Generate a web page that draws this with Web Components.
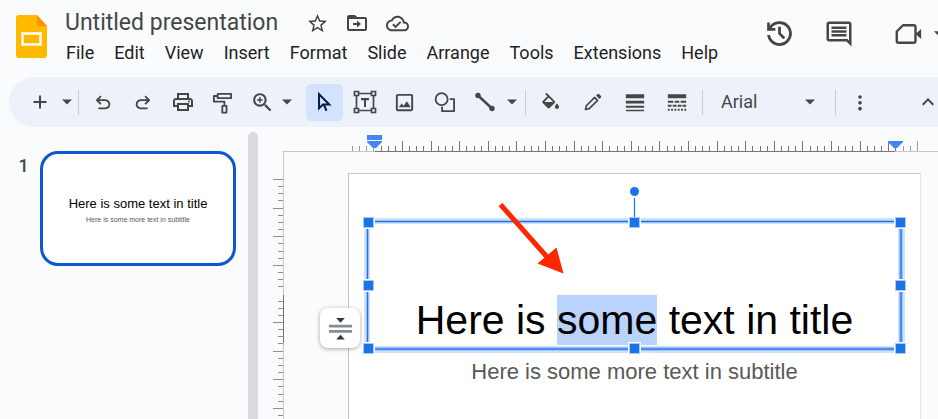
<!DOCTYPE html>
<html lang="en">
<head>
<meta charset="utf-8">
<title>Untitled presentation</title>
<style>
html, body { height: 100%; }
body { margin: 0; background: #f9fbfd; overflow: hidden; font-family: Roboto, "Liberation Sans", sans-serif; color: #444746; }
</style>
</head>
<body>
<slides-app></slides-app>
<script>
const ICONS = {
  star: '<path d="M22 9.24l-7.19-.62L12 2 9.19 8.63 2 9.24l5.46 4.73L5.82 21 12 17.27 18.18 21l-1.63-7.03L22 9.24zM12 15.4l-3.76 2.27 1-4.28-3.32-2.88 4.38-.38L12 6.1l1.71 4.04 4.38.38-3.32 2.88 1 4.28L12 15.4z"/>',
  move: '<path d="M20 6h-8l-2-2H4c-1.1 0-2 .9-2 2v12c0 1.1.9 2 2 2h16c1.1 0 2-.9 2-2V8c0-1.1-.9-2-2-2zm0 12H4V8h16v10zM12 16.500l4-3.500-4-3.500V12H8v2h4z"/><path d="M3 5h8l2 3H3z"/>',
  cloud: '<path d="M19.35 10.04C18.67 6.59 15.64 4 12 4 9.11 4 6.6 5.64 5.35 8.04 2.34 8.36 0 10.91 0 14c0 3.31 2.69 6 6 6h13c2.76 0 5-2.24 5-5 0-2.64-2.05-4.78-4.65-4.96zM19 18H6c-2.21 0-4-1.79-4-4 0-2.05 1.53-3.76 3.56-3.97l1.07-.11.5-.95C8.08 7.14 9.94 6 12 6c2.62 0 4.88 1.86 5.39 4.43l.3 1.5 1.53.11c1.56.1 2.78 1.41 2.78 2.96 0 1.65-1.35 3-3 3zm-9-3.82l-2.09-2.09L6.5 13.5 10 17l6.01-6.01-1.41-1.41z"/>',
  history: '<path d="M12 21q-3.45 0-6.01-2.29T3.05 13H5.1q.35 2.6 2.31 4.3T12 19q2.93 0 4.96-2.04T19 12t-2.04-4.96T12 5q-1.73 0-3.23.8T6.25 8H9v2H3V4h2v2.35q1.28-1.6 3.11-2.47T12 3q1.88 0 3.51.71t2.85 1.93 1.93 2.85T21 12t-.71 3.51-1.93 2.85-2.85 1.93T12 21zm2.8-4.8L11 12.4V7h2v4.6l3.2 3.2z"/>',
  comment: '<path d="M22 4c0-1.1-.9-2-2-2H4c-1.1 0-2 .9-2 2v12c0 1.1.9 2 2 2h14l4 4V4zm-2 13.2L18.8 16H4V4h16v13.2zM6 12h12v2H6zm0-3h12v2H6zm0-3h12v2H6z"/>',
  video: '<path d="M8 5h8.5Q18 5 18 6.5v11q0 1.5-1.500 1.500H4.500Q3 19 3 17.500V10z" fill="none" stroke="currentColor" stroke-width="1.900" stroke-linejoin="round"/><path d="M18 12l4.500-4v8z"/>',
  plus: '<path d="M11 5.500h2V11h5.500v2H13v5.500h-2V13H5.500v-2H11z"/>',
  caret: '<path d="M2 7h20L12 17z"/>',
  undo: '<path d="M7 20v-2h7.100q1.575 0 2.738-1T18 14.500 16.838 12 14.100 11H7.800l2.600 2.600L9 15l-5-5 5-5 1.400 1.400L7.800 9h6.300q2.425 0 4.163 1.575T20 14.500t-1.737 3.925T14.100 20z"/>',
  redo: '<path d="M17 20v-2H9.900q-1.575 0-2.738-1T6 14.500 7.162 12 9.900 11h6.300l-2.600 2.600L15 15l5-5-5-5-1.400 1.400L16.200 9H9.900Q7.475 9 5.737 10.575T4 14.500t1.737 3.925T9.900 20z"/>',
  print: '<path d="M19 8h-1V3H6v5H5c-1.660 0-3 1.340-3 3v6h4v4h12v-4h4v-6c0-1.660-1.340-3-3-3zM8 5h8v3H8V5zm8 14H8v-4h8v4zm2-4v-2H6v2H4v-4c0-.55.45-1 1-1h14c.55 0 1 .45 1 1v4h-2z"/><circle cx="18" cy="11.500" r="1"/>',
  paint: '<path d="M7 3h14v4.500H7zM7 5.200H3V11h11v4M11.800 15.500h4.400v7h-4.400z" fill="none" stroke="currentColor" stroke-width="1.900" stroke-linejoin="round"/>',
  zoom: '<path d="M15.500 14h-.79l-.28-.27A6.471 6.471 0 0 0 16 9.500 6.500 6.500 0 1 0 9.500 16c1.610 0 3.090-.59 4.230-1.570l.27.28v.79l5 4.990L20.490 19l-4.990-5zm-6 0C7.010 14 5 11.990 5 9.500S7.010 5 9.500 5 14 7.010 14 9.500 11.990 14 9.500 14zm.7-7.200H8.800v2h-2v1.400h2v2h1.400v-2h2V8.800h-2z"/>',
  pointer: '<path d="M5.500 3.500v15.500l4.200-4.200h7zM10.500 14.500l3.200 7" fill="none" stroke="currentColor" stroke-width="2.200"/>',
  textbox: '<path d="M3.500 6v12M20.500 6v12M6 3.500h12M6 20.500h12M1.500 1.500h4v4h-4zM18.500 1.500h4v4h-4zM1.500 18.500h4v4h-4zM18.500 18.500h4v4h-4z" fill="none" stroke="currentColor" stroke-width="1.700"/><path d="M8 8h8v2.300h-3V17h-2v-6.700H8z"/>',
  image: '<path d="M19 5v14H5V5h14m0-2H5c-1.100 0-2 .9-2 2v14c0 1.100.9 2 2 2h14c1.100 0 2-.9 2-2V5c0-1.100-.9-2-2-2zM6 17l3-4 2 2.400 3.500-4.600L18.500 17z"/>',
  shape: '<circle cx="9" cy="8.500" r="6.300" fill="none" stroke="currentColor" stroke-width="1.900"/><path d="M17.500 8.500H22V21H9.500v-4.500" fill="none" stroke="currentColor" stroke-width="1.900" stroke-linejoin="round"/>',
  line: '<path d="M5 5.500l14 13" stroke="currentColor" stroke-width="2.400"/><circle cx="5" cy="5.500" r="2.700"/><circle cx="19" cy="18.500" r="2.700"/>',
  fill: '<path d="M16.560 8.940L7.620 0 6.210 1.410l2.380 2.380-5.150 5.150c-.59.59-.59 1.540 0 2.120l5.500 5.500c.29.29.68.44 1.060.44s.77-.15 1.060-.44l5.500-5.500c.59-.58.59-1.530 0-2.120zM5.210 10L10 5.210 14.790 10zM19 11.500s-2.300 2.170-2.300 3.700c0 1.300 1 2.300 2.300 2.300s2.300-1 2.300-2.300c0-1.530-2.300-3.700-2.300-3.700z" transform="translate(-.5 2)"/>',
  pencil: '<path d="M3 21l1-4.500L14 6.500 17.500 10 7.500 20z" fill="none" stroke="currentColor" stroke-width="2" stroke-linejoin="round"/><path d="M15.700 4.300l1.800-1.800q.9-.7 1.700 0L21.500 4.800q.7.8 0 1.700l-1.800 1.800z"/>',
  weight: '<path d="M2 3.500h20v4.500H2zM2 10.500h20v3.200H2zM2 16h20v2.300H2zM2 20.500h20V22H2z"/>',
  dash: '<path d="M2 3.500h20v4.500H2zM2 10.500h6v2.200H2zM9.500 10.500h5v2.200h-5zM16 10.500h6v2.200h-6zM2 15h4v2.200H2zM7.300 15h4.200v2.200H7.300zM12.700 15h4.200v2.200h-4.200zM18 15h4v2.200h-4zM2 19.400h2v2.200H2zM5.600 19.400h2v2.200h-2zM9.200 19.400h2v2.200h-2zM12.800 19.400h2v2.200h-2zM16.400 19.400h2v2.200h-2zM20 19.400h2v2.200h-2z"/>',
  more: '<circle cx="12" cy="6" r="2.200"/><circle cx="12" cy="13" r="2.200"/><circle cx="12" cy="20" r="2.200"/>',
  up: '<path d="M12 8l-6 6 1.410 1.410L12 10.830l4.590 4.580L18 14z"/>',
  collapse: '<path d="M7.500 1h9L12 6zM7.500 23.500h9L12 18.500z" fill="#33363b"/><path d="M0 8h24v3H0zM0 13.500h24v3H0z" fill="#868b94"/>'
};

function define(name, css, html) {
  customElements.define(name, class extends HTMLElement {
    connectedCallback() {
      if (this.shadowRoot) return;
      const root = this.attachShadow({ mode: 'open' });
      const t = document.createElement('template');
      t.innerHTML = `<style>*{box-sizing:border-box}${css}</style>` + (typeof html === 'function' ? html(this) : html);
      root.append(t.content.cloneNode(true));
    }
  });
}

define('ui-icon', ':host{display:block;flex:none;line-height:0}svg{display:block}',
  el => { const s = el.getAttribute('size') || 24;
    return `<svg width="${s}" height="${s}" viewBox="0 0 24 24" fill="currentColor" aria-hidden="true">${ICONS[el.getAttribute('name')]}</svg>`; });

define('icon-button',
  `:host{display:block;flex:none}
   button{display:grid;place-items:center;width:var(--w,37px);height:37px;padding:0;border:0;border-radius:5px;background:none;color:inherit}
   :host([active]) button{background:#d3e3fd;color:#041e49}
   :host([narrow]) button{width:10px}`,
  el => `<button type="button" aria-label="${el.getAttribute('label')}"><ui-icon name="${el.getAttribute('name')}" size="${el.getAttribute('size') || 24}"></ui-icon></button>`);

define('menu-item',
  `:host{display:block}button{padding:0 10px;border:0;background:none;font:400 18px/24px Roboto,sans-serif;color:#1f1f1f}`,
  '<button type="button"><slot></slot></button>');

define('app-header',
  `:host{display:flex;height:77px;padding:0 0 0 16px;align-items:flex-start;justify-content:space-between}
   .left{display:flex}
   .logo{display:block;margin-top:15px}
   .titles{padding:8px 0 0 9px}
   .row{display:flex;align-items:center;height:30px;padding-left:9px}
   input{width:232px;height:28px;margin:0;padding:0;border:0;background:none;font:400 23px/28px Roboto,sans-serif;color:#444746;outline:0}
   icon-button{--w:40px}
   nav{display:flex;padding-top:3px}
   .right{display:flex;align-items:center;padding-top:15px;margin-right:-5px}
   .right icon-button{--w:60px}
   .right .meet{--w:50px;margin-left:14px}`,
  `<div class="left">
     <svg class="logo" width="31" height="43" viewBox="0 0 31 43" aria-label="Slides" role="img"><path d="M3 0h18l10 11v29a3 3 0 0 1-3 3H3a3 3 0 0 1-3-3V3a3 3 0 0 1 3-3z" fill="#ffba00"/><path d="M21 0l10 11H23a2 2 0 0 1-2-2z" fill="#ff9100"/><path d="M6.500 18.500h18v11h-18z" fill="none" stroke="#fff" stroke-width="2.400"/></svg>
     <div class="titles">
       <div class="row"><input aria-label="Rename" value="Untitled presentation">
         <icon-button name="star" label="Star" size="23"></icon-button><icon-button name="move" label="Move" size="24"></icon-button><icon-button name="cloud" label="Saved to Drive" size="23"></icon-button></div>
       <nav>${['File','Edit','View','Insert','Format','Slide','Arrange','Tools','Extensions','Help'].map(t => `<menu-item>${t}</menu-item>`).join('')}</nav>
     </div>
   </div>
   <div class="right"><icon-button name="history" label="Version history" size="33"></icon-button><icon-button name="comment" label="Comments" size="30"></icon-button><icon-button class="meet" name="video" label="Meet" size="30"></icon-button><icon-button narrow name="caret" label="Meet options" size="11"></icon-button></div>`);

define('tool-group', ':host{display:flex;align-items:center;gap:var(--gap,3px);flex:none}', '<slot></slot>');
define('tool-separator', ':host{display:block;flex:none;width:1px;height:25px;background:#c7cacf;margin:0 var(--after,5px) 0 var(--before,7px)}', '');
define('font-select',
  `:host{display:grid;width:117px;align-items:center}
   select,ui-icon{grid-area:1/1}
   select{appearance:none;width:100%;height:34px;padding:0 10px;border:0;background:none;font:400 18px/24px Roboto,sans-serif;color:#444746}
   ui-icon{justify-self:end;margin-right:12px;pointer-events:none}`,
  '<select aria-label="Font"><option>Arial</option></select><ui-icon name="caret" size="12"></ui-icon>');

define('tool-bar',
  `:host{display:flex;align-items:center;height:50px;margin-left:9px;padding-left:12px;border-radius:25px 0 0 25px;background:#edf2fa;overflow:hidden}
   .end{margin-left:auto;margin-right:-8px}`,
  `<tool-group><icon-button name="plus" label="New slide" size="24"></icon-button><icon-button narrow name="caret" label="New slide layouts" size="12"></icon-button></tool-group>
   <tool-separator></tool-separator>
   <tool-group><icon-button name="undo" label="Undo" size="22"></icon-button><icon-button name="redo" label="Redo" size="22"></icon-button><icon-button name="print" label="Print"></icon-button><icon-button name="paint" label="Paint format" size="23"></icon-button>
     <tool-group style="--gap:0px"><icon-button name="zoom" label="Zoom" size="25"></icon-button><icon-button narrow name="caret" label="Zoom levels" size="12"></icon-button></tool-group></tool-group>
   <tool-group style="margin-left:15px"><icon-button active name="pointer" label="Select" size="22"></icon-button><icon-button name="textbox" label="Text box" size="24"></icon-button><icon-button name="image" label="Image" size="23"></icon-button><icon-button name="shape" label="Shape" size="23"></icon-button><icon-button name="line" label="Line" size="24"></icon-button><icon-button narrow name="caret" label="Line types" size="12"></icon-button></tool-group>
   <tool-separator style="--before:9px;--after:6px"></tool-separator>
   <tool-group style="--gap:5px"><icon-button name="fill" label="Fill color" size="22"></icon-button><icon-button name="pencil" label="Border color" size="20"></icon-button><icon-button name="weight" label="Border weight" size="22"></icon-button><icon-button name="dash" label="Border dash" size="22"></icon-button></tool-group>
   <tool-separator style="--before:7px;--after:8px"></tool-separator>
   <font-select></font-select>
   <tool-separator></tool-separator>
   <icon-button name="more" label="More" size="20"></icon-button>
   <icon-button class="end" name="up" label="Hide the menus" size="24"></icon-button>`);

define('slide-thumb',
  `:host{display:flex;gap:13px;padding:24px 12px 0 20px}
   .n{width:7px;font:500 18px/24px Roboto,sans-serif;color:#444746;padding-top:3px;display:flex;justify-content:center}
   a{flex:1;height:115px;border:3px solid #0b57d0;border-radius:18px;background:#fff;display:block;text-align:center;text-decoration:none;padding-top:42px;font-family:"Liberation Sans",Arial,sans-serif;white-space:nowrap}
   .t{font-size:13px;line-height:16px;color:#000}.s{font-size:7px;line-height:8px;color:#595959;margin-top:4px}`,
  `<span class="n">1</span><a href="#slide1"><div class="t"><slot name="title"></slot></div><div class="s"><slot name="subtitle"></slot></div></a>`);

const STEP = 28.6 / 4;
define('h-ruler',
  ':host{display:block;height:25px;overflow:hidden}svg{display:block;width:100%;height:25px}',
  () => {
    let s = '<path d="M0 24.500H655" stroke="#c4c7c5"/><path d="M92 24.500H612" stroke="#747775"/>';
    for (let i = -7; i <= 72; i++) {
      const x = Math.round(119 + i * STEP);
      s += `<path d="M${x}.500 ${i % 4 ? 19 : 14}V24" stroke="${x < 92 || x > 612 ? '#9b9d9c' : '#747775'}"/>`;
    }
    return `<svg>${s}<path d="M84 8h15v5H84zM84 14h15v1l-6 6h-3l-6-6zM605 14h15v1l-6 6h-3l-6-6z" fill="#4285f4"/></svg>`;
  });
define('v-ruler',
  ':host{display:block;width:11px;overflow:hidden}svg{display:block;width:11px;height:100%}',
  () => {
    let s = '<path d="M10.500 0V1000" stroke="#c4c7c5"/><path d="M10.500 144V192" stroke="#747775"/>';
    for (let i = 0; i <= 60; i++) {
      if (i === 16) continue;
      s += `<path d="M${i % 4 ? 5 : 0} ${Math.round(28 + i * STEP)}.500H10" stroke="#8d908e"/>`;
    }
    return `<svg>${s}</svg>`;
  });

define('selection-frame',
  `:host{position:absolute;inset:-1px;pointer-events:none;border:2px solid #4a8ff0;border-top:1px solid #1a73e8;border-left:1px solid #1a73e8;box-shadow:0 0 0 1px #9cc0fa,0 0 0 3px #d0e1fd,inset 0 0 0 1px #9cc0fa,inset 0 0 0 2px #d0e1fd}
   i{position:absolute;width:11px;height:11px;margin:-5px;background:#1a73e8;border:1px solid #a9c9fa;outline:1px solid #fff}
   .rot{position:absolute;left:50%;top:-35px;width:9px;height:9px;margin-left:-4px;border-radius:50%;background:#1a73e8}
   .stem{position:absolute;left:50%;top:-24px;width:1px;height:19px;background:#1a73e8;outline:1px solid #b9d2fb55}`,
  [0, 50, 100].flatMap(y => [0, 50, 100].map(x => x === 50 && y === 50 ? '' : `<i style="left:${x}%;top:${y}%"></i>`)).join('') + '<span class="stem"></span><span class="rot"></span>');

define('slide-canvas',
  `:host{display:block;flex:1;padding:22px 17px 0 64px;position:relative;min-width:0}
   .slide{height:100%;min-height:250px;background:#fff;border:1px solid #c4c7c5;border-right-color:#e3e5e8;border-bottom:0;padding:48px 19px 0;font-family:"Liberation Sans",Arial,sans-serif;text-align:center;white-space:nowrap}
   .title{position:relative;height:127px;display:flex;align-items:flex-end;justify-content:center;padding-bottom:4px}
   h1{margin:0;font-size:41px;line-height:50px;font-weight:400;color:#000}
   p{margin:10px 0 0;font-size:22px;line-height:26px;color:#595959}
   .arrow{position:absolute;left:214px;top:51px}
   .notes{position:absolute;left:36px;top:157px;width:40px;height:40px;padding:0;border:0;border-radius:8px;background:#fff;box-shadow:0 1px 4px #00000059;display:grid;place-items:center}`,
  `<main class="slide"><div class="title"><h1><slot name="title"></slot></h1><selection-frame></selection-frame></div><p><slot name="subtitle"></slot></p></main>
   <svg class="arrow" width="68" height="74" viewBox="0 0 68 74" aria-hidden="true"><path d="M2.500 2.500L49 55" stroke="#ff2600" stroke-width="5"/><path d="M65.500 71.500L39.500 61.500 58.500 45.500z" fill="#ff2600"/></svg>
   <button class="notes" type="button" aria-label="Collapse"><ui-icon name="collapse" size="23"></ui-icon></button>`);

define('slides-app',
  `:host{display:flex;flex-direction:column;height:100vh;overflow:hidden}
   .body{display:flex;flex:1;min-height:0}
   aside{width:248px;flex:none}
   .bar{width:10px;flex:none;margin-top:5px;border-radius:5px 5px 0 0;background:#dadce0}
   .work{flex:1;min-width:0;display:flex;flex-direction:column;padding-left:15px}
   h-ruler{margin-left:10px}
   .area{display:flex;flex:1;min-height:0;margin-top:-1px}
   mark{background:#bad3fd;color:inherit;display:inline-block;line-height:50px}`,
  `<app-header></app-header><tool-bar></tool-bar>
   <div class="body"><aside><slide-thumb><span slot="title">Here is some text in title</span><span slot="subtitle">Here is some more text in subtitle</span></slide-thumb></aside>
   <div class="bar"></div>
   <div class="work"><h-ruler></h-ruler><div class="area"><v-ruler></v-ruler><slide-canvas><span slot="title">Here is <mark>some</mark> text in title</span><span slot="subtitle">Here is some more text in subtitle</span></slide-canvas></div></div></div>`);
</script>
</body>
</html>
